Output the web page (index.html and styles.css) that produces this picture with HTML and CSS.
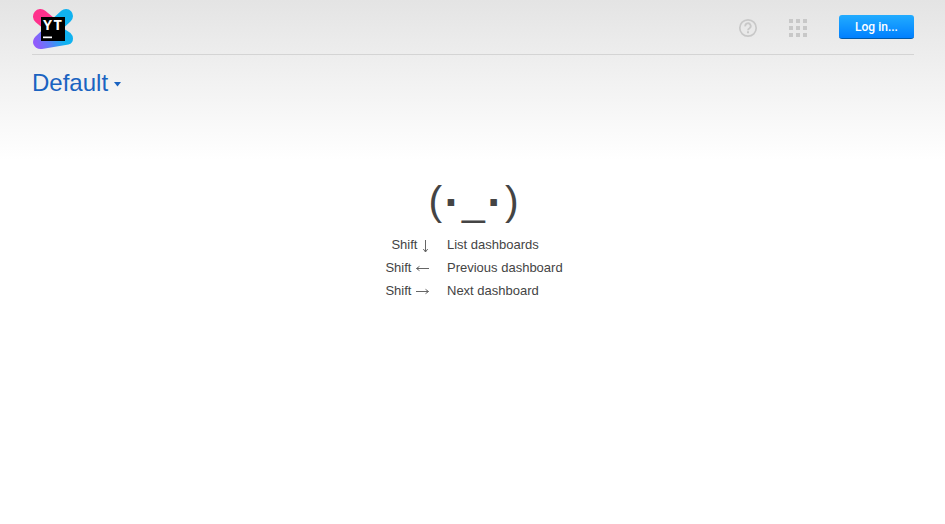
FILE: index.html
```html
<!DOCTYPE html>
<html lang="en">
<head>
<meta charset="utf-8">
<title>Dashboard</title>
<link rel="stylesheet" href="styles.css">
</head>
<body>
<header class="header">
  <a class="logo" aria-label="YouTrack">
    <svg width="42" height="42" viewBox="0 0 42 42">
      <defs>
        <linearGradient id="violet" gradientUnits="userSpaceOnUse" x1="5" y1="37" x2="30" y2="28"><stop offset="0" stop-color="#905cfb"/><stop offset=".5" stop-color="#5681f7"/><stop offset="1" stop-color="#10b2f0"/></linearGradient>
      </defs>
      <path d="M8.500 8.500L20 18" stroke="#ff318c" stroke-width="15" stroke-linecap="round"/>
      <path d="M34 8L20 21" stroke="#10b2f0" stroke-width="14" stroke-linecap="round"/>
      <path d="M20 13L3.500 28.500Q0.200 32 1.300 36Q3.500 41.500 10 40.900L36.500 36.500Q41 35.200 41 30.500Q41 27.500 38.500 25Z" fill="url(#violet)"/>
      <path d="M9 9h24v24H9z"/>
      <text class="letters" x="11" y="22">YT</text>
      <path d="M11 28.500h9v1.700h-9z" fill="#fff"/>
    </svg>
  </a>
  <svg class="help" width="20" height="20" viewBox="0 0 20 20" fill="none" stroke="#c8c8c8">
    <circle cx="10" cy="10" r="8.200" stroke-width="1.700"/>
    <path d="M7.300 8.300A2.700 2.700 0 1 1 11.500 10.200Q10 11.100 10 12.300" stroke-width="1.800"/>
    <path d="M10 13.300v1.900" stroke-width="2"/>
  </svg>
  <svg class="apps" width="18" height="18" viewBox="0 0 18 18" fill="#c8c8c8">
    <path d="M0 0h4v4H0zM7 0h4v4H7zM14 0h4v4h-4zM0 7h4v4H0zM7 7h4v4H7zM14 7h4v4h-4zM0 14h4v4H0zM7 14h4v4H7zM14 14h4v4h-4z"/>
  </svg>
  <button class="login">Log in...</button>
</header>
<main>
  <h1 class="title">Default<svg class="caret" width="7" height="5" viewBox="0 0 7 5"><path d="M0 0h7L3.500 4.500z"/></svg></h1>
  <section class="empty">
    <div class="face">(<b>·</b>_<b>·</b>)</div>
    <dl class="keys">
      <dt>Shift <svg class="arrow" width="7" height="13" viewBox="0 0 7 13"><path d="M3.500 0v12M1.300 9L3.500 12L5.700 9"/></svg></dt><dd>List dashboards</dd>
      <dt>Shift <svg class="arrow" width="13" height="13" viewBox="0 0 13 13"><path d="M.5 5.500H13M3.500 3.300L.5 5.500L3.500 7.700"/></svg></dt><dd>Previous dashboard</dd>
      <dt>Shift <svg class="arrow" width="13" height="13" viewBox="0 0 13 13"><path d="M0 5.500H12.500M9.500 3.300L12.500 5.500L9.500 7.700"/></svg></dt><dd>Next dashboard</dd>
    </dl>
  </section>
</main>
</body>
</html>
```
FILE: styles.css
```css
body {
  margin: 0;
  min-height: 524px;
  background: #fff linear-gradient(#e4e4e4, #fff 160px) no-repeat;
  font: 13px/23px "Liberation Sans", Arial, sans-serif;
  color: #444;
}
.header {
  display: flex;
  box-sizing: border-box;
  height: 55px;
  margin: 0 31px 0 32px;
  border-bottom: 1px solid #d4d4d4;
}
.logo { margin: 8px auto 0 0; height: 42px; }
.letters { font: 700 14.500px "Open Sans", sans-serif; letter-spacing: 1.500px; fill: #fff; }
.help { margin: 18px 31px 0 0; }
.apps { margin: 19px 32px 0 0; }
.login {
  width: 75px;
  height: 24px;
  margin-top: 15px;
  padding: 1px 0 0;
  border: 0;
  border-bottom: 1px solid #0059a9;
  border-radius: 3px;
  background: linear-gradient(#22acff, #0080ff);
  color: #fff;
  font: 500 12px/22px Roboto, sans-serif;
}
.title {
  display: flex;
  align-items: center;
  margin: 14px 32px 0;
  font-size: 24px;
  line-height: 28px;
  font-weight: normal;
  color: #1a63c1;
}
.caret { margin: 3px 0 0 6px; fill: #1a63c1; }
.empty { margin-top: 77px; }
.face {
  display: flex;
  justify-content: center;
  height: 59px;
  padding-left: 2px;
  font-size: 41px;
  line-height: 55px;
}
.face b {
  display: flex;
  justify-content: center;
  width: 20px;
  font-size: 46px;
  line-height: 56px;
}
.keys {
  display: grid;
  grid-template-columns: 429px 1fr;
  column-gap: 18px;
  margin: 0;
}
.keys dt { text-align: right; }
.keys dd { margin: 0; }
.arrow {
  margin-left: 1px;
  vertical-align: -4px;
  fill: none;
  stroke: #666;
  stroke-width: 1;
}
```
